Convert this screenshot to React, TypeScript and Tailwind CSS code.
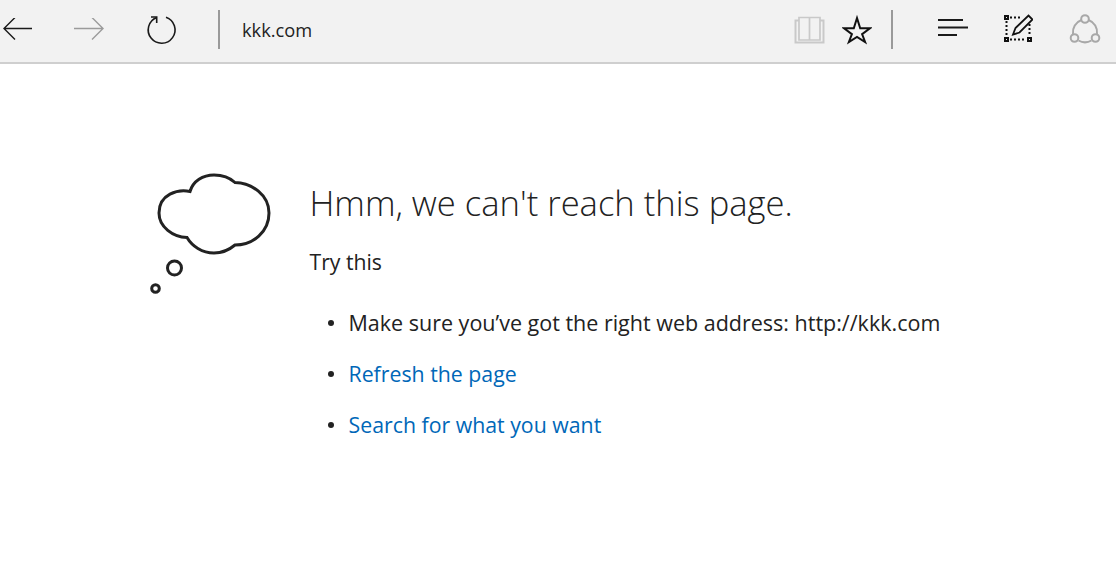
function Divider({ className }: { className: string }) {
  return <div className={`w-[2px] h-[39px] bg-[#9a9a9a] ${className}`} />;
}

function Toolbar() {
  return (
    <div className="flex items-center h-[64px] bg-[#f2f2f2] border-b-2 border-[#cfcfcf] pb-[3px]">
      <svg width="34" height="24" viewBox="0 0 34 24" className="ml-[1px]" fill="none" stroke="#1a1a1a" strokeWidth="1.4">
        <path d="M31 10.500H3M14 -.5L3 10.500l11 11" />
      </svg>
      <svg width="34" height="24" viewBox="0 0 34 24" className="ml-[37px]" fill="none" stroke="#9b9b9b" strokeWidth="1.4">
        <path d="M2 10.500h29M20 -.5l11 11-11 11" />
      </svg>
      <svg width="32" height="31" viewBox="0 0 32 31" className="ml-[40px]" fill="none" stroke="#1a1a1a" strokeWidth="1.6">
        <path d="M20 3.200A13.400 13.400 0 1 1 10.700 3.400" />
        <path d="M5 3h5.700v6" />
      </svg>
      <Divider className="ml-[40px]" />
      <span className="ml-[22px] mt-[1px] text-[18.3px] text-[#222222]">kkk.com</span>

      <svg width="31" height="29" viewBox="0 0 31 29" className="ml-auto" fill="none" stroke="#c9c9c9" strokeWidth="2">
        <path d="M5 2.500h10.500v22.500H5zM15.500 2.500H26v22.500H15.500z" strokeWidth="1.700" />
        <path d="M5 5.500H1.500V27.500h28V5.500H26" />
      </svg>
      <svg width="30" height="33" viewBox="0 0 30 33" className="ml-[17px]" fill="none" stroke="#111111" strokeWidth="2" strokeMiterlimit="10">
        <path d="M15 5l3.200 10.200h9.800l-7.900 6 3 7.800-8.100-5-8.100 5 3-7.800-7.900-6h9.800z" />
      </svg>
      <Divider className="ml-[19px]" />
      <svg width="32" height="23" viewBox="0 0 32 23" className="ml-[45px]" fill="none" stroke="#1a1a1a" strokeWidth="2">
        <path d="M0 2h25M0 9.500h30M0 17h19" />
      </svg>
      <svg width="30" height="31" viewBox="0 0 30 31" className="ml-[33px]" fill="none" stroke="#111111">
        <path d="M3.500 7v15M7 25.500h16M7 3.500h12M26.500 10v12" strokeWidth="2" strokeDasharray="2 2" />
        <rect x="2" y="2" width="3" height="3" strokeWidth="2" />
        <rect x="2" y="24" width="3" height="3" strokeWidth="2" />
        <rect x="25" y="24" width="3" height="3" strokeWidth="2" />
        <path d="M10 20.500l2.500-6.500L25.500 1.500l4 4L16.500 18.500z" strokeWidth="1.800" />
      </svg>
      <svg width="32" height="33" viewBox="0 0 32 33" className="ml-[36px] mr-[15px]" fill="none" stroke="#a8a8a8" strokeWidth="2">
        <circle cx="16" cy="6" r="3.800" />
        <circle cx="5.500" cy="25" r="3.800" />
        <circle cx="26.500" cy="25" r="3.800" />
        <path d="M12.500 7A13 13 0 0 0 4 21M19.500 7A13 13 0 0 1 28 21M9.500 27.500A13 13 0 0 0 22.500 27.500" />
      </svg>
    </div>
  );
}

function Cloud() {
  return (
    <svg width="140" height="140" viewBox="0 0 140 140" fill="none" stroke="#222222" strokeWidth="3" className="shrink-0">
      <path d="M50 26.500C38 24 19 29 19 48c0 14 14 24 28 24.500C52 81 62 88 74 88c8 0 15-3 21-8 18 0 34-13 34-32 0-18-17-30-34-30.500C89 12 82 10 74 10 63 10 53 16 50 26.500z" />
      <circle cx="34.500" cy="103" r="7" />
      <circle cx="15.500" cy="123.500" r="3.800" />
    </svg>
  );
}

function Item({ text, link }: { text: string; link?: boolean }) {
  return (
    <li className="flex items-center">
      <span className="ml-[18.5px] mr-[15px] w-[5.500px] h-[5.500px] rounded-full bg-[#222222]" />
      <span className={link ? 'text-[#0067b8] text-[21.3px]' : ''}>{text}</span>
    </li>
  );
}

export default function App() {
  return (
    <div className="h-[563px] w-[1116px] overflow-hidden bg-white font-['Open_Sans','Noto_Sans',sans-serif]">
      <Toolbar />
      <div className="flex pl-[140px] pt-[101px]">
        <Cloud />
        <div className="ml-[29.500px] text-[#222222]">
          <h1 className="text-[34.600px] font-light leading-[44px] mt-[16px] whitespace-nowrap">Hmm, we can't reach this page.</h1>
          <p className="text-[21.2px] leading-[28px] mt-[23px]">Try this</p>
          <ul className="mt-[33px] text-[21.5px] leading-[28px] flex flex-col gap-[23px] whitespace-nowrap">
            <Item text="Make sure you’ve got the right web address: http://kkk.com" />
            <Item text="Refresh the page" link />
            <Item text="Search for what you want" link />
          </ul>
        </div>
      </div>
    </div>
  );
}
